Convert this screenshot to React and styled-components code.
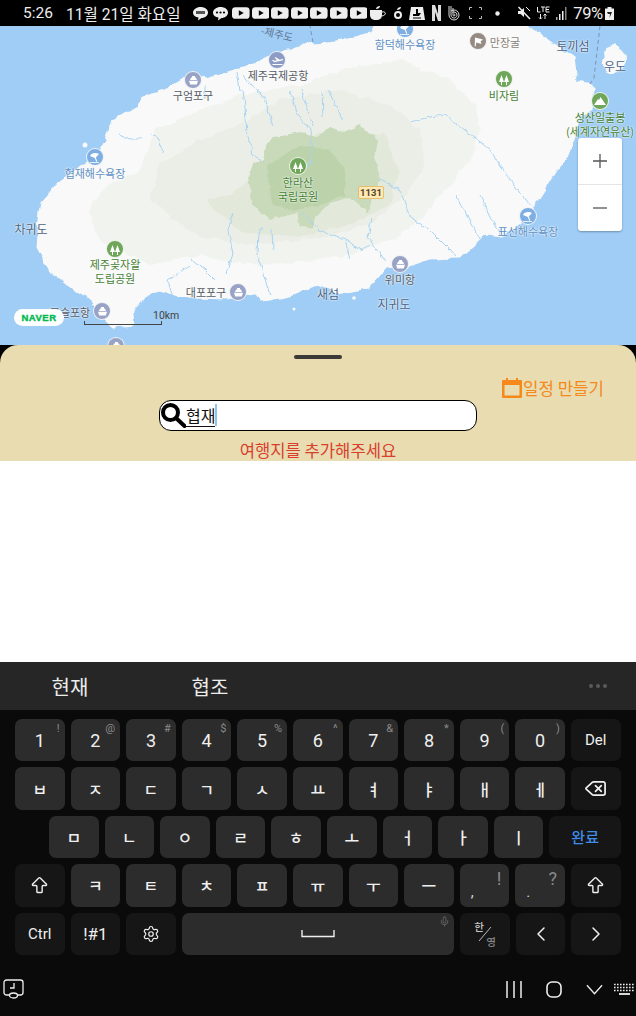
import styled, { createGlobalStyle } from "styled-components";
import { ArrowBigUp, ChevronLeft, ChevronRight, Delete, Mic, Settings } from "lucide-react";

const KR = `"Noto Sans CJK KR", "Noto Sans", sans-serif`;
const RB = `Roboto, "Noto Sans CJK KR", sans-serif`;

const GlobalStyle = createGlobalStyle`
  html, body { margin: 0; padding: 0; background: #000; }
  body { width: 636px; height: 1016px; overflow: hidden; font-family: ${KR}; }
`;

const Screen = styled.div`
  width: 636px;
  height: 1016px;
  display: flex;
  flex-direction: column;
  overflow: hidden;
`;

/* status bar */
const StatusBar = styled.div`
  height: 26px;
  flex: none;
  background: #000;
  color: #eee;
  display: flex;
  align-items: center;
  padding-left: 23px;
  font-family: ${RB};
  font-size: 15.5px;
  position: relative;
  z-index: 3;
`;
const Clock = styled.span`
  width: 43px;
`;
const DateText = styled.span`
  width: 127px;
  font-size: 15.6px;
  white-space: nowrap;
`;
const IconRow = styled.div`
  display: flex;
  align-items: center;
  gap: ${(p) => p.$gap ?? 2}px;
  margin-left: ${(p) => p.$left ?? 0}px;
`;
const Battery = styled.span`
  width: 30px;
  margin-left: 6px;
  font-size: 16.5px;
  letter-spacing: -0.3px;
  white-space: nowrap;
`;

const Play = () => (
  <svg width="17.6" height="12" viewBox="0 0 18 12">
    <rect width="18" height="12" rx="3.5" fill="#eee" />
    <path d="M7 3.2 12 6 7 8.8z" fill="#000" />
  </svg>
);

/* map */
const MapArea = styled.div`
  height: 319px;
  flex: none;
  position: relative;
  overflow: hidden;
  background: #9fcdf5;
`;
const MapSvg = styled.svg`
  display: block;
  width: 636px;
  height: 319px;
`;
const Place = styled.span`
  position: absolute;
  left: ${(p) => p.$x}px;
  top: ${(p) => p.$y - 26}px;
  transform: translate(-50%, -50%);
  font-size: ${(p) => p.$size ?? 11}px;
  line-height: 14px;
  color: ${(p) => p.$color ?? "#555b66"};
  text-align: center;
  white-space: pre;
  text-shadow: 0 0 2px rgba(255, 255, 255, 0.9), 0 0 2px rgba(255, 255, 255, 0.9);
`;
const Route = styled(Place)`
  font-size: 10.5px;
  color: #5d7390;
  transform: translate(-50%, -50%) rotate(13deg);
  text-shadow: none;
`;
const Pin = styled.span`
  position: absolute;
  left: ${(p) => p.$x - 9}px;
  top: ${(p) => p.$y - 35}px;
  width: 18px;
  height: 18px;
  box-sizing: border-box;
  border-radius: 50%;
  border: 1.5px solid rgba(255, 255, 255, 0.85);
  background: ${(p) => p.$color};
  display: flex;
  align-items: center;
  justify-content: center;
`;
const Shield = styled.span`
  position: absolute;
  left: 358px;
  top: 160px;
  width: 26px;
  height: 13px;
  box-sizing: border-box;
  border: 1px solid #e8bd6c;
  border-radius: 2px;
  background: #fdeab9;
  color: #5a4420;
  font: 700 9.5px/11px ${RB};
  text-align: center;
`;
const NaverBadge = styled.span`
  position: absolute;
  left: 14px;
  top: 283px;
  width: 50px;
  height: 17px;
  border-radius: 9px;
  background: #fff;
  color: #03b950;
  font: 900 9.5px/17px "Liberation Sans", sans-serif;
  letter-spacing: 0.5px;
  text-align: center;
  -webkit-text-stroke: 0.4px #03b950;
`;
const ScaleText = styled.span`
  position: absolute;
  left: 153px;
  top: 283px;
  font: 10.5px/13px ${RB};
  color: #444;
`;
const ScaleBar = styled.span`
  position: absolute;
  left: 84px;
  top: 295px;
  width: 76px;
  height: 3px;
  border: 1px solid #444;
  border-top: none;
`;
const ZoomBox = styled.div`
  position: absolute;
  left: 578px;
  top: 112px;
  width: 44px;
  height: 93px;
  background: #fff;
  border-radius: 3px;
  box-shadow: 0 1px 2px rgba(0, 0, 0, 0.3);
  display: flex;
  flex-direction: column;
`;
const ZoomBtn = styled.div`
  flex: 1;
  display: flex;
  align-items: center;
  justify-content: center;
  & + & {
    border-top: 1px solid #e4e4e4;
  }
`;

/* sheet */
const Sheet = styled.div`
  height: 116px;
  flex: none;
  box-sizing: border-box;
  background: #e8dcb0;
  border-radius: 18px 18px 0 0;
  display: flex;
  flex-direction: column;
  padding-top: 10px;
`;
const Handle = styled.div`
  width: 48px;
  height: 4px;
  border-radius: 2px;
  background: #3c3a36;
  align-self: center;
`;
const PlanRow = styled.div`
  display: flex;
  justify-content: flex-end;
  align-items: center;
  height: 22px;
  margin-top: 18px;
  padding-right: 32px;
  color: #f5891b;
  font-size: 16.8px;
`;
const SearchBox = styled.div`
  width: 318px;
  height: 32px;
  box-sizing: border-box;
  margin: 1px 0 0 159px;
  border: 1.5px solid #000;
  border-radius: 12px;
  background: #fff;
  display: flex;
  align-items: center;
  font-size: 16px;
  color: #111;
`;
const Typed = styled.span`
  border-bottom: 1px solid #111;
  line-height: 21px;
  margin-top: 2px;
`;
const Caret = styled.span`
  width: 1.5px;
  height: 22px;
  background: #8fc5e8;
`;
const Warning = styled.div`
  margin-top: 8px;
  text-align: center;
  color: #d8402e;
  font-size: 16.6px;
  line-height: 22px;
`;
const Blank = styled.div`
  height: 201px;
  flex: none;
  background: #fff;
`;

/* keyboard */
const Keyboard = styled.div`
  flex: 1;
  background: #0a0a0a;
  display: flex;
  flex-direction: column;
`;
const Suggestions = styled.div`
  height: 48px;
  flex: none;
  background: #262626;
  display: flex;
  align-items: center;
  color: #ececec;
  font-size: 20px;
`;
const Suggestion = styled.span`
  width: 140px;
  text-align: center;
`;
const More = styled.div`
  margin-left: auto;
  margin-right: 29px;
  display: flex;
  gap: 3px;
  & > i {
    width: 4px;
    height: 4px;
    border-radius: 50%;
    background: #5a5a5a;
  }
`;
const Keys = styled.div`
  display: flex;
  flex-direction: column;
  gap: 6px;
  padding: 9px 15px 0;
`;
const KeyRow = styled.div`
  display: flex;
  gap: 6px;
  height: 42.4px;
  padding-left: ${(p) => p.$indent ?? 0}px;
`;
const Key = styled.div`
  flex: ${(p) => (p.$grow ? "1" : "none")};
  width: ${(p) => (p.$grow ? "auto" : "49.6px")};
  position: relative;
  border-radius: 7px;
  background: ${(p) => (p.$fn ? "#161616" : "#2c2c2c")};
  color: ${(p) => p.$color ?? "#efefef"};
  font-family: ${(p) => (p.$jamo ? KR : RB)};
  font-weight: ${(p) => (p.$jamo ? 500 : 400)};
  font-size: ${(p) => p.$size ?? 18}px;
  display: flex;
  align-items: center;
  justify-content: center;
`;
const Sup = styled.span`
  position: absolute;
  top: 3px;
  right: 5px;
  font: 11px/14px ${RB};
  color: #8a8a8a;
`;
const BigSup = styled(Sup)`
  top: 5px;
  right: 8px;
  font-size: 18px;
  line-height: 20px;
`;
const Low = styled.span`
  position: absolute;
  left: 11px;
  bottom: 7px;
  font: 15px/15px ${RB};
  color: #d5d5d5;
`;
const Han = styled.span`
  position: absolute;
  left: 14px;
  top: 8px;
  font-size: 10.5px;
  line-height: 12px;
  color: #c8c8c8;
`;
const Yeong = styled(Han)`
  left: auto;
  top: auto;
  right: 14px;
  bottom: 7px;
  color: #888;
`;
const MicSlot = styled.span`
  position: absolute;
  top: 3px;
  right: 4px;
  display: flex;
  color: #666;
`;
const NavBar = styled.div`
  flex: 1;
  display: flex;
  align-items: center;
  padding: 8px 1px 0 3px;
  color: #eee;
`;
const NavRight = styled.div`
  margin-left: auto;
  display: flex;
  align-items: center;
  gap: 24px;
`;
const NavEnd = styled.div`
  display: flex;
  align-items: center;
  gap: 11px;
`;

const ship = (
  <svg width="11" height="11" viewBox="0 0 11 11" fill="#fff">
    <path d="M4 1h3v1.500h1L9 5H2l1-2.500h1zM1 5.800h9L8.800 9.500H2.200z" />
  </svg>
);
const plane = (
  <svg width="13" height="11" viewBox="0 0 13 11" fill="#fff">
    <path d="M1 5.500 2 4.800l1.500 1 2.500-.6L3.500 2.500l1.300-.3 4 2.500 2.500-.6c1-.2 1.400.8.500 1.100L3.500 7.200zM1.500 9h10v1h-10z" />
  </svg>
);
const umbrella = (
  <svg width="12" height="11" viewBox="0 0 12 11" fill="#fff">
    <path d="M1 4c1-3 6-4 9-2L6.800 5.500l1.500 4-1 .3L5.800 6 1 4z" />
    <path d="M1 10h9v.8H1z" />
  </svg>
);
const trees = (
  <svg width="12" height="11" viewBox="0 0 12 11" fill="#fff">
    <path d="M3.500 1 6 8H4v3H3V8H1zM8.500 1 11 8H9v3H8V8H6z" />
  </svg>
);
const flag = (
  <svg width="11" height="11" viewBox="0 0 11 11" fill="#fff">
    <path d="M2 1.500 10 3.500 7.500 5.500 8.500 8 3.300 6.500 2.600 10.500 1.700 10.300z" />
  </svg>
);
const peak = (
  <svg width="12" height="10" viewBox="0 0 12 10" fill="#fff">
    <path d="M0 9 4 3l1 1 1.500-3L12 9z" />
  </svg>
);

const PINS = [
  [277, 60, "#8c9cc4", plane],
  [193, 80, "#99a3c5", ship],
  [95, 157, "#7fafe2", umbrella],
  [405, 29, "#7fafe2", umbrella],
  [478, 41, "#958b84", flag],
  [504, 79, "#6fa65a", trees],
  [600, 101, "#6fa65a", peak],
  [298, 166, "#6fa65a", trees],
  [115, 249, "#6fa65a", trees],
  [238, 292, "#99a3c5", ship],
  [102, 311, "#99a3c5", ship],
  [400, 264, "#99a3c5", ship],
  [528, 216, "#7fafe2", umbrella],
  [116, 346, "#99a3c5", ship],
];

const BLUE = "#5f8fc4";
const GREEN = "#447f33";
const SEA = "#4c6383";

const PLACES = [
  [278, 75, "제주국제공항"],
  [193, 95, "구엄포구"],
  [95, 173, "협재해수욕장", BLUE],
  [405, 44, "함덕해수욕장", BLUE],
  [505, 42, "만장굴", "#8a7f78"],
  [573, 46, "토끼섬", SEA, 12],
  [615, 66, "우도", SEA, 12],
  [504, 95, "비자림", GREEN],
  [600, 124, "성산일출봉\n(세계자연유산)", GREEN],
  [298, 189, "한라산\n국립공원", GREEN],
  [31, 229, "차귀도", SEA, 12],
  [115, 271, "제주곶자왈\n도립공원", GREEN],
  [206, 292, "대포포구"],
  [70, 312, "모슬포항"],
  [328, 294, "새섬", SEA, 12],
  [400, 279, "위미항"],
  [394, 304, "지귀도", SEA, 12],
  [528, 231, "표선해수욕장", BLUE],
];

const COAST =
  "313,42 293,50 267,58 248,67 227,72 207,80 187,78 167,90 143,97 140,108 113,120 107,140 97,157 75,172 60,183 43,203 40,220 38,247 50,270 70,285 90,297 97,307 103,318 113,327 133,325 132,313 147,293 160,290 173,294 197,297 227,298 253,293 263,300 290,295 316,284 335,290 349,292 368,287 386,267 409,265 429,258 459,257 473,245 486,233 503,235 519,223 533,207 546,187 556,170 568,155 574,140 579,113 590,110 593,90 586,85 576,83 573,57 549,42 536,33 519,22 379,20 373,33 336,43 316,45";

const RIVERS = [
  "243,90 245,107 247,133 253,155 263,162",
  "265,98 273,127",
  "290,90 297,113 310,130 312,153 307,170",
  "302,90 313,127",
  "328,90 343,120",
  "322,90 323,117",
  "237,72 240,90 243,90",
  "243,75 255,90 265,98",
  "410,122 430,117 445,115 465,130 490,150 500,165 510,180 525,200 533,207",
  "150,133 158,138 163,153",
  "130,139 143,139",
  "120,135 130,139",
  "205,85 205,100",
  "380,180 400,190 410,217 430,230 450,250 456,257",
  "233,212 228,230 233,253 225,275",
  "263,227 258,233 257,253 265,280 270,295",
  "272,230 273,250",
  "303,213 320,230 347,240 360,250 370,245",
  "372,218 368,237 385,262",
  "190,258 205,270 215,280",
  "172,295 168,280 190,265",
  "455,195 470,220 480,240",
  "480,195 500,235",
  "345,240 350,260",
];

const NUMBERS = [
  ["1", "!"], ["2", "@"], ["3", "#"], ["4", "$"], ["5", "%"],
  ["6", "^"], ["7", "&"], ["8", "*"], ["9", "("], ["0", ")"],
];
const ROW2 = ["ㅂ", "ㅈ", "ㄷ", "ㄱ", "ㅅ", "ㅛ", "ㅕ", "ㅑ", "ㅐ", "ㅔ"];
const ROW3 = ["ㅁ", "ㄴ", "ㅇ", "ㄹ", "ㅎ", "ㅗ", "ㅓ", "ㅏ", "ㅣ"];
const ROW4 = ["ㅋ", "ㅌ", "ㅊ", "ㅍ", "ㅠ", "ㅜ", "ㅡ"];

export default function App() {
  return (
    <Screen>
      <GlobalStyle />
      <StatusBar>
        <Clock>5:26</Clock>
        <DateText>11월 21일 화요일</DateText>
        <IconRow $gap={5}>
          <svg width="15" height="15" viewBox="0 0 15 15">
            <path d="M7.500 1C11.500 1 15 3.200 15 6.500S11.500 12 8.500 12L5 14.500 5.500 11.500C2.500 11 0 9.500 0 6.500S3.500 1 7.500 1z" fill="#eee" />
            <path d="M3 5h9v3H3z" fill="#555" />
          </svg>
          <svg width="15" height="15" viewBox="0 0 15 15">
            <path d="M7.500 1C11.500 1 15 3.200 15 6.500S11.500 12 8.500 12L5 14.500 5.500 11.500C2.500 11 0 9.500 0 6.500S3.500 1 7.500 1z" fill="#eee" />
            <circle cx="4" cy="6.500" r="1.100" fill="#000" />
            <circle cx="7.500" cy="6.500" r="1.100" fill="#000" />
            <circle cx="11" cy="6.500" r="1.100" fill="#000" />
          </svg>
        </IconRow>
        <IconRow $left={4}>
          {Array.from({ length: 7 }, (_, i) => (
            <Play key={i} />
          ))}
        </IconRow>
        <IconRow $left={3} $gap={7}>
          <svg width="17" height="15" viewBox="0 0 17 15">
            <path d="M0 4h12v5c0 3-2 5-6 5S0 12 0 9z" fill="#eee" />
            <path d="M12 6c4-1 5 3 0 4" stroke="#eee" fill="none" />
            <path d="M6 3c0-2 2-3 4-3 0 2-2 3-4 3z" fill="#eee" />
          </svg>
          <svg width="8" height="14" viewBox="0 0 8 14">
            <circle cx="4" cy="9" r="3" stroke="#eee" strokeWidth="2" fill="none" />
            <path d="M3 4c0-2 2-3 4-3 0 2-2 3-4 3z" fill="#eee" />
          </svg>
          <svg width="16" height="15" viewBox="0 0 16 15">
            <path d="M2 1h12l2 13H0z" fill="#eee" />
            <path d="M7 3h2v4h3l-2 3H4V8h3zM4 11.500h8v1H4z" fill="#000" />
          </svg>
          <svg width="9" height="16" viewBox="0 0 9 16">
            <path d="M0 0h3l3 9V0h3v16H6L3 7v9H0z" fill="#ddd" />
          </svg>
          <svg width="14" height="16" viewBox="0 0 14 16" fill="none" stroke="#ddd">
            <path d="M1 1v9a5 5 0 1 0 2-4" />
            <path d="M3 1v9a3 3 0 1 0 1.500-2.600" />
            <path d="M5 3v7a1 1 0 1 0 1-1" />
          </svg>
          <svg width="13" height="12" viewBox="0 0 13 12" fill="none" stroke="#bbb">
            <path d="M0.500 3V0.500H3M10 0.500h2.500V3M12.500 9v2.500H10M3 11.500H0.500V9" />
          </svg>
          <svg width="5" height="5" viewBox="0 0 5 5" style={{ marginLeft: 6 }}>
            <circle cx="2.500" cy="2.500" r="2.200" fill="#eee" />
          </svg>
        </IconRow>
        <IconRow $left={17} $gap={6}>
          <svg width="14" height="14" viewBox="0 0 14 14" fill="#eee">
            <path d="M1 5h2.500L7 2v9L3.500 8H1z" />
            <path d="M1.500 1 13 13" stroke="#eee" strokeWidth="1.500" />
            <path d="M9 1 13 5" stroke="#eee" />
          </svg>
          <svg width="13" height="14" viewBox="0 0 13 14" fill="none" stroke="#eee" strokeWidth="1">
            <path d="M0.500 1v5h3M4 1h4M6 1v5M9 6V1h3.500M9 3.500h3M9 6h3.500M3.500 8v5M2 11.500 3.500 13 5 11.500M8 13V8M6.500 9.500 8 8l1.500 1.500" />
          </svg>
          <svg width="11" height="14" viewBox="0 0 11 14" fill="#eee">
            <path d="M0 11h1.500v3H0z" opacity="0.7" />
            <path d="M3 8h1.500v6H3zM6 5h1.500v9H6z" />
            <path d="M9 1h1.500v13H9z" opacity="0.55" />
          </svg>
        </IconRow>
        <Battery>79%</Battery>
        <svg width="9" height="13" viewBox="0 0 9 13" style={{ marginLeft: 2 }}>
          <path d="M2.500 0h4v1.500H9V13H0V1.500h2.500z" fill="#eee" />
          <path d="M2 5h5L4.500 11 5 7H3z" fill="#222" />
        </svg>
      </StatusBar>

      <MapArea>
        <MapSvg viewBox="0 26 636 319">
          <defs>
            <filter id="rough" filterUnits="userSpaceOnUse" x="0" y="0" width="636" height="360">
              <feTurbulence type="fractalNoise" baseFrequency="0.09" numOctaves="2" seed="4" />
              <feDisplacementMap in="SourceGraphic" scale="7" xChannelSelector="R" yChannelSelector="G" />
            </filter>
            <filter id="roughFine" filterUnits="userSpaceOnUse" x="0" y="0" width="636" height="360">
              <feTurbulence type="fractalNoise" baseFrequency="0.14" numOctaves="2" seed="9" />
              <feDisplacementMap in="SourceGraphic" scale="5" xChannelSelector="R" yChannelSelector="G" />
            </filter>
          </defs>
          <g filter="url(#rough)">
            <polygon points={COAST} fill="#f8f9f8" stroke="#f8f9f8" strokeWidth="3" strokeLinejoin="round" />
            <path d="M603 50c5-6 14-6 16-2 1 4 7 6 7 13 0 8-6 12-14 12-7 0-10-4-9-10 1-5 3-8 0-13z" fill="#f8f9f8" />
            <polygon points="88,215 100,190 140,170 155,130 200,110 240,95 300,85 340,70 400,60 450,80 475,105 480,130 470,160 450,185 425,215 400,235 350,255 300,262 250,265 200,255 150,265 120,250 100,240" fill="#f1f3ee" />
            <polygon points="150,200 160,165 200,140 240,125 280,100 340,90 390,105 420,130 425,165 405,195 370,225 310,240 250,245 195,235" fill="#ebeee6" />
            <polygon points="205,200 240,190 270,150 330,130 385,135 400,170 390,205 350,225 300,238 240,232" fill="#e3e9da" />
          </g>
          <circle cx="85" cy="145" r="2.500" fill="#f8f9f8" />
          <circle cx="294" cy="309" r="1.500" fill="#f8f9f8" />
          <circle cx="354" cy="298" r="1.800" fill="#f8f9f8" />
          <g filter="url(#roughFine)">
            <polygon points="263,160 267,143 277,137 300,132 317,137 330,127 343,132 360,125 378,140 375,157 380,180 370,203 368,212 350,197 330,203 315,217 313,228 300,227 297,213 270,220 253,205 248,177 253,163" fill="#c8dab9" />
            <polygon points="267,165 300,145 330,150 345,170 345,195 320,205 295,210 272,205" fill="#bbd2aa" />
          </g>
          <g filter="url(#roughFine)">
            {RIVERS.map((points) => (
              <polyline key={points} points={points} fill="none" stroke="#a9d3f2" strokeWidth="1" />
            ))}
          </g>
          <path d="M313 42 310 26M600 26 594 78 590 84" fill="none" stroke="#7d94b3" strokeWidth="1" strokeDasharray="4 3" />
        </MapSvg>
        {PINS.map(([x, y, color, icon]) => (
          <Pin key={`${x}-${y}`} $x={x} $y={y} $color={color}>
            {icon}
          </Pin>
        ))}
        {PLACES.map(([x, y, name, color, size]) => (
          <Place key={name} $x={x} $y={y} $color={color} $size={size}>
            {name}
          </Place>
        ))}
        <Route $x={277} $y={34}>-제주도</Route>
        <Shield>1131</Shield>
        <NaverBadge>NAVER</NaverBadge>
        <ScaleText>10km</ScaleText>
        <ScaleBar />
        <ZoomBox>
          <ZoomBtn>
            <svg width="14" height="14" viewBox="0 0 14 14">
              <path d="M7 0v14M0 7h14" stroke="#555" strokeWidth="1.300" />
            </svg>
          </ZoomBtn>
          <ZoomBtn>
            <svg width="14" height="14" viewBox="0 0 14 14">
              <path d="M0 7h14" stroke="#555" strokeWidth="1.300" />
            </svg>
          </ZoomBtn>
        </ZoomBox>
      </MapArea>

      <Sheet>
        <Handle />
        <PlanRow>
          <svg width="22" height="22" viewBox="0 0 22 22">
            <path d="M5 1h2v2h8V1h2v2h3a1 1 0 0 1 1 1v16a1 1 0 0 1-1 1H2a1 1 0 0 1-1-1V4a1 1 0 0 1 1-1h3z" fill="#f5891b" />
            <rect x="3.500" y="8" width="15" height="10.500" fill="#e8dcb0" />
          </svg>
          일정 만들기
        </PlanRow>
        <SearchBox>
          <svg width="26" height="26" viewBox="0 0 26 26">
            <circle cx="10.500" cy="10.500" r="7.500" fill="none" stroke="#000" strokeWidth="4" />
            <path d="M16 16 24.500 24" stroke="#000" strokeWidth="4" strokeLinecap="round" />
          </svg>
          <Typed>협재</Typed>
          <Caret />
        </SearchBox>
        <Warning>여행지를 추가해주세요</Warning>
      </Sheet>
      <Blank />

      <Keyboard>
        <Suggestions>
          <Suggestion>현재</Suggestion>
          <Suggestion>협조</Suggestion>
          <More>
            <i />
            <i />
            <i />
          </More>
        </Suggestions>
        <Keys>
          <KeyRow>
            {NUMBERS.map(([n, s]) => (
              <Key key={n}>
                {n}
                <Sup>{s}</Sup>
              </Key>
            ))}
            <Key $fn $size={15}>Del</Key>
          </KeyRow>
          <KeyRow>
            {ROW2.map((k) => (
              <Key key={k} $jamo $size={16}>{k}</Key>
            ))}
            <Key $fn>
              <Delete size={23} strokeWidth={1.8} />
            </Key>
          </KeyRow>
          <KeyRow $indent={34}>
            {ROW3.map((k) => (
              <Key key={k} $jamo $size={16}>{k}</Key>
            ))}
            <Key $fn $grow $jamo $size={15} $color="#3f8be8">완료</Key>
          </KeyRow>
          <KeyRow>
            <Key $fn>
              <ArrowBigUp size={21} strokeWidth={1.6} />
            </Key>
            {ROW4.map((k) => (
              <Key key={k} $jamo $size={16}>{k}</Key>
            ))}
            <Key>
              <Low>,</Low>
              <BigSup>!</BigSup>
            </Key>
            <Key>
              <Low>.</Low>
              <BigSup>?</BigSup>
            </Key>
            <Key $fn>
              <ArrowBigUp size={21} strokeWidth={1.6} />
            </Key>
          </KeyRow>
          <KeyRow>
            <Key $fn $size={15}>Ctrl</Key>
            <Key $fn $size={17}>!#1</Key>
            <Key $fn>
              <Settings size={18} strokeWidth={1.6} />
            </Key>
            <Key $grow>
              <svg width="34" height="8" viewBox="0 0 34 8">
                <path d="M1 0v6.500h32V0" fill="none" stroke="#eee" strokeWidth="1.400" />
              </svg>
              <MicSlot>
                <Mic size={11} />
              </MicSlot>
            </Key>
            <Key $fn $jamo>
              <Han>한</Han>
              <svg width="14" height="16" viewBox="0 0 14 16">
                <path d="M13 1 1 15" stroke="#bbb" />
              </svg>
              <Yeong>영</Yeong>
            </Key>
            <Key $fn>
              <ChevronLeft size={24} strokeWidth={1.5} />
            </Key>
            <Key $fn>
              <ChevronRight size={24} strokeWidth={1.5} />
            </Key>
          </KeyRow>
        </Keys>
        <NavBar>
          <svg width="21" height="20" viewBox="0 0 21 20" fill="none" stroke="#eee" strokeWidth="1.300">
            <rect x="1" y="1" width="19" height="15" rx="2.500" />
            <path d="M11 4v5H7" />
            <ellipse cx="10.500" cy="16.500" rx="4" ry="2.500" fill="#0a0a0a" />
          </svg>
          <NavRight>
            <svg width="16" height="17" viewBox="0 0 16 17">
              <path d="M1 0v17M8 0v17M15 0v17" stroke="#eee" strokeWidth="1.500" />
            </svg>
            <svg width="16" height="17" viewBox="0 0 16 17">
              <rect x="1" y="1" width="14" height="15" rx="5" fill="none" stroke="#eee" strokeWidth="1.600" />
            </svg>
            <NavEnd>
              <svg width="17" height="11" viewBox="0 0 18 11">
                <path d="M1 1 9 10 17 1" fill="none" stroke="#eee" strokeWidth="1.400" />
              </svg>
              <svg width="21" height="12" viewBox="0 0 21 12">
                <path d="M0 1.500h21M0 4.500h21M0 7.500h21" stroke="#eee" strokeWidth="1.600" strokeDasharray="1.600 1.400" />
                <path d="M5 11h11" stroke="#eee" strokeWidth="1.800" />
              </svg>
            </NavEnd>
          </NavRight>
        </NavBar>
      </Keyboard>
    </Screen>
  );
}
